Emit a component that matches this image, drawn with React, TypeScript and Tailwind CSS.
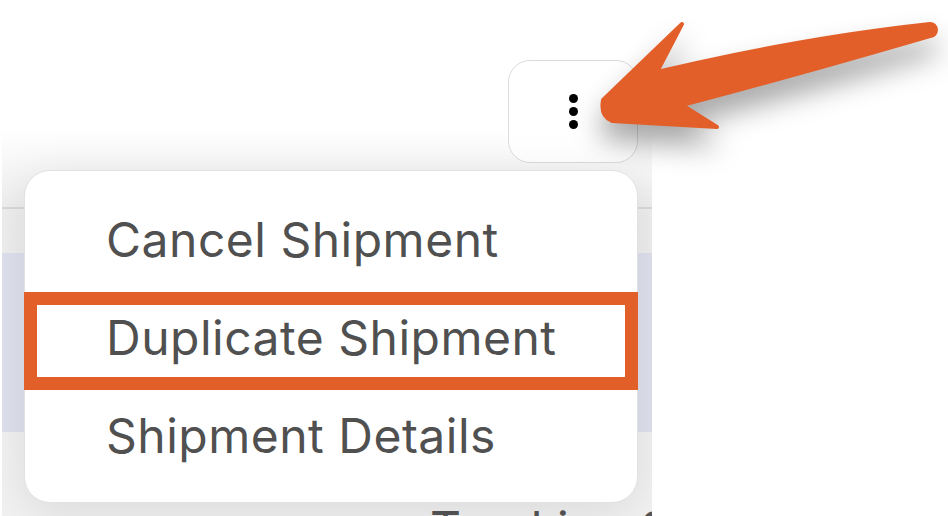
export default function App() {
  const items = ["Cancel Shipment", "Duplicate Shipment", "Shipment Details"];

  return (
    <div className="relative w-[948px] h-[516px] bg-white overflow-hidden font-['Inter',sans-serif]">
      {/* cropped page behind the menu */}
      <div className="relative w-[650px] h-full ml-[2px] overflow-hidden flex flex-col">
        <div className="h-[207px] shrink-0 bg-gradient-to-b from-white from-[62%] to-[#eeeeee] flex justify-end items-start pt-[60px] pr-[14px]">
          <button className="w-[130px] h-[103px] rounded-[22px] border border-[#dcdcdc] bg-white flex flex-col items-center justify-center gap-[4px]">
            <span className="w-[9px] h-[9px] rounded-full bg-black" />
            <span className="w-[9px] h-[9px] rounded-full bg-black" />
            <span className="w-[9px] h-[9px] rounded-full bg-black" />
          </button>
        </div>
        <div className="h-[2px] shrink-0 bg-[#d9d9d9]" />
        <div className="h-[44px] shrink-0 bg-[#efefef]" />
        <div className="h-[179px] shrink-0 bg-[#dfe2ee]" />
        <div className="flex-1 min-h-0 overflow-hidden bg-[#f2f2f2] pl-[428px] pt-[73px]">
          <span className="text-[48px] leading-none text-[#555] whitespace-nowrap">Tracking Status</span>
        </div>

        {/* dropdown menu */}
        <div className="absolute left-[22px] top-[170px] w-[614px] h-[333px] bg-white rounded-[26px] border border-[#e2e2e2] shadow-[0_10px_50px_rgba(0,0,0,0.10)] pt-[23px] pb-[14px] flex flex-col">
          {items.map((label, i) => (
            <div
              key={label}
              className={
                i === 1
                  ? "-mx-px h-[98px] shrink-0 flex items-center border-[13px] border-[#e35f2a] pl-[69px]"
                  : "h-[98px] shrink-0 flex items-center pl-[81px]"
              }
            >
              <span className="text-[48px] leading-none text-[#505050] tracking-[0.5px] whitespace-nowrap -mt-[6px]">
                {label}
              </span>
            </div>
          ))}
        </div>
      </div>

      {/* annotation arrow */}
      <svg
        className="absolute left-0 top-0 drop-shadow-[0_18px_14px_rgba(0,0,0,0.35)]"
        width="948"
        height="516"
        viewBox="0 0 948 516"
      >
        <path
          d="M930 24 Q800 38 657 72 L682 24 L603 100 Q600 116 612 121 L717 127 L682 105 Q800 74 930 36 A6 6 0 0 0 930 24 Z"
          fill="#e35f2a"
          stroke="#e35f2a"
          strokeWidth="4"
          strokeLinejoin="round"
        />
      </svg>
    </div>
  );
}
